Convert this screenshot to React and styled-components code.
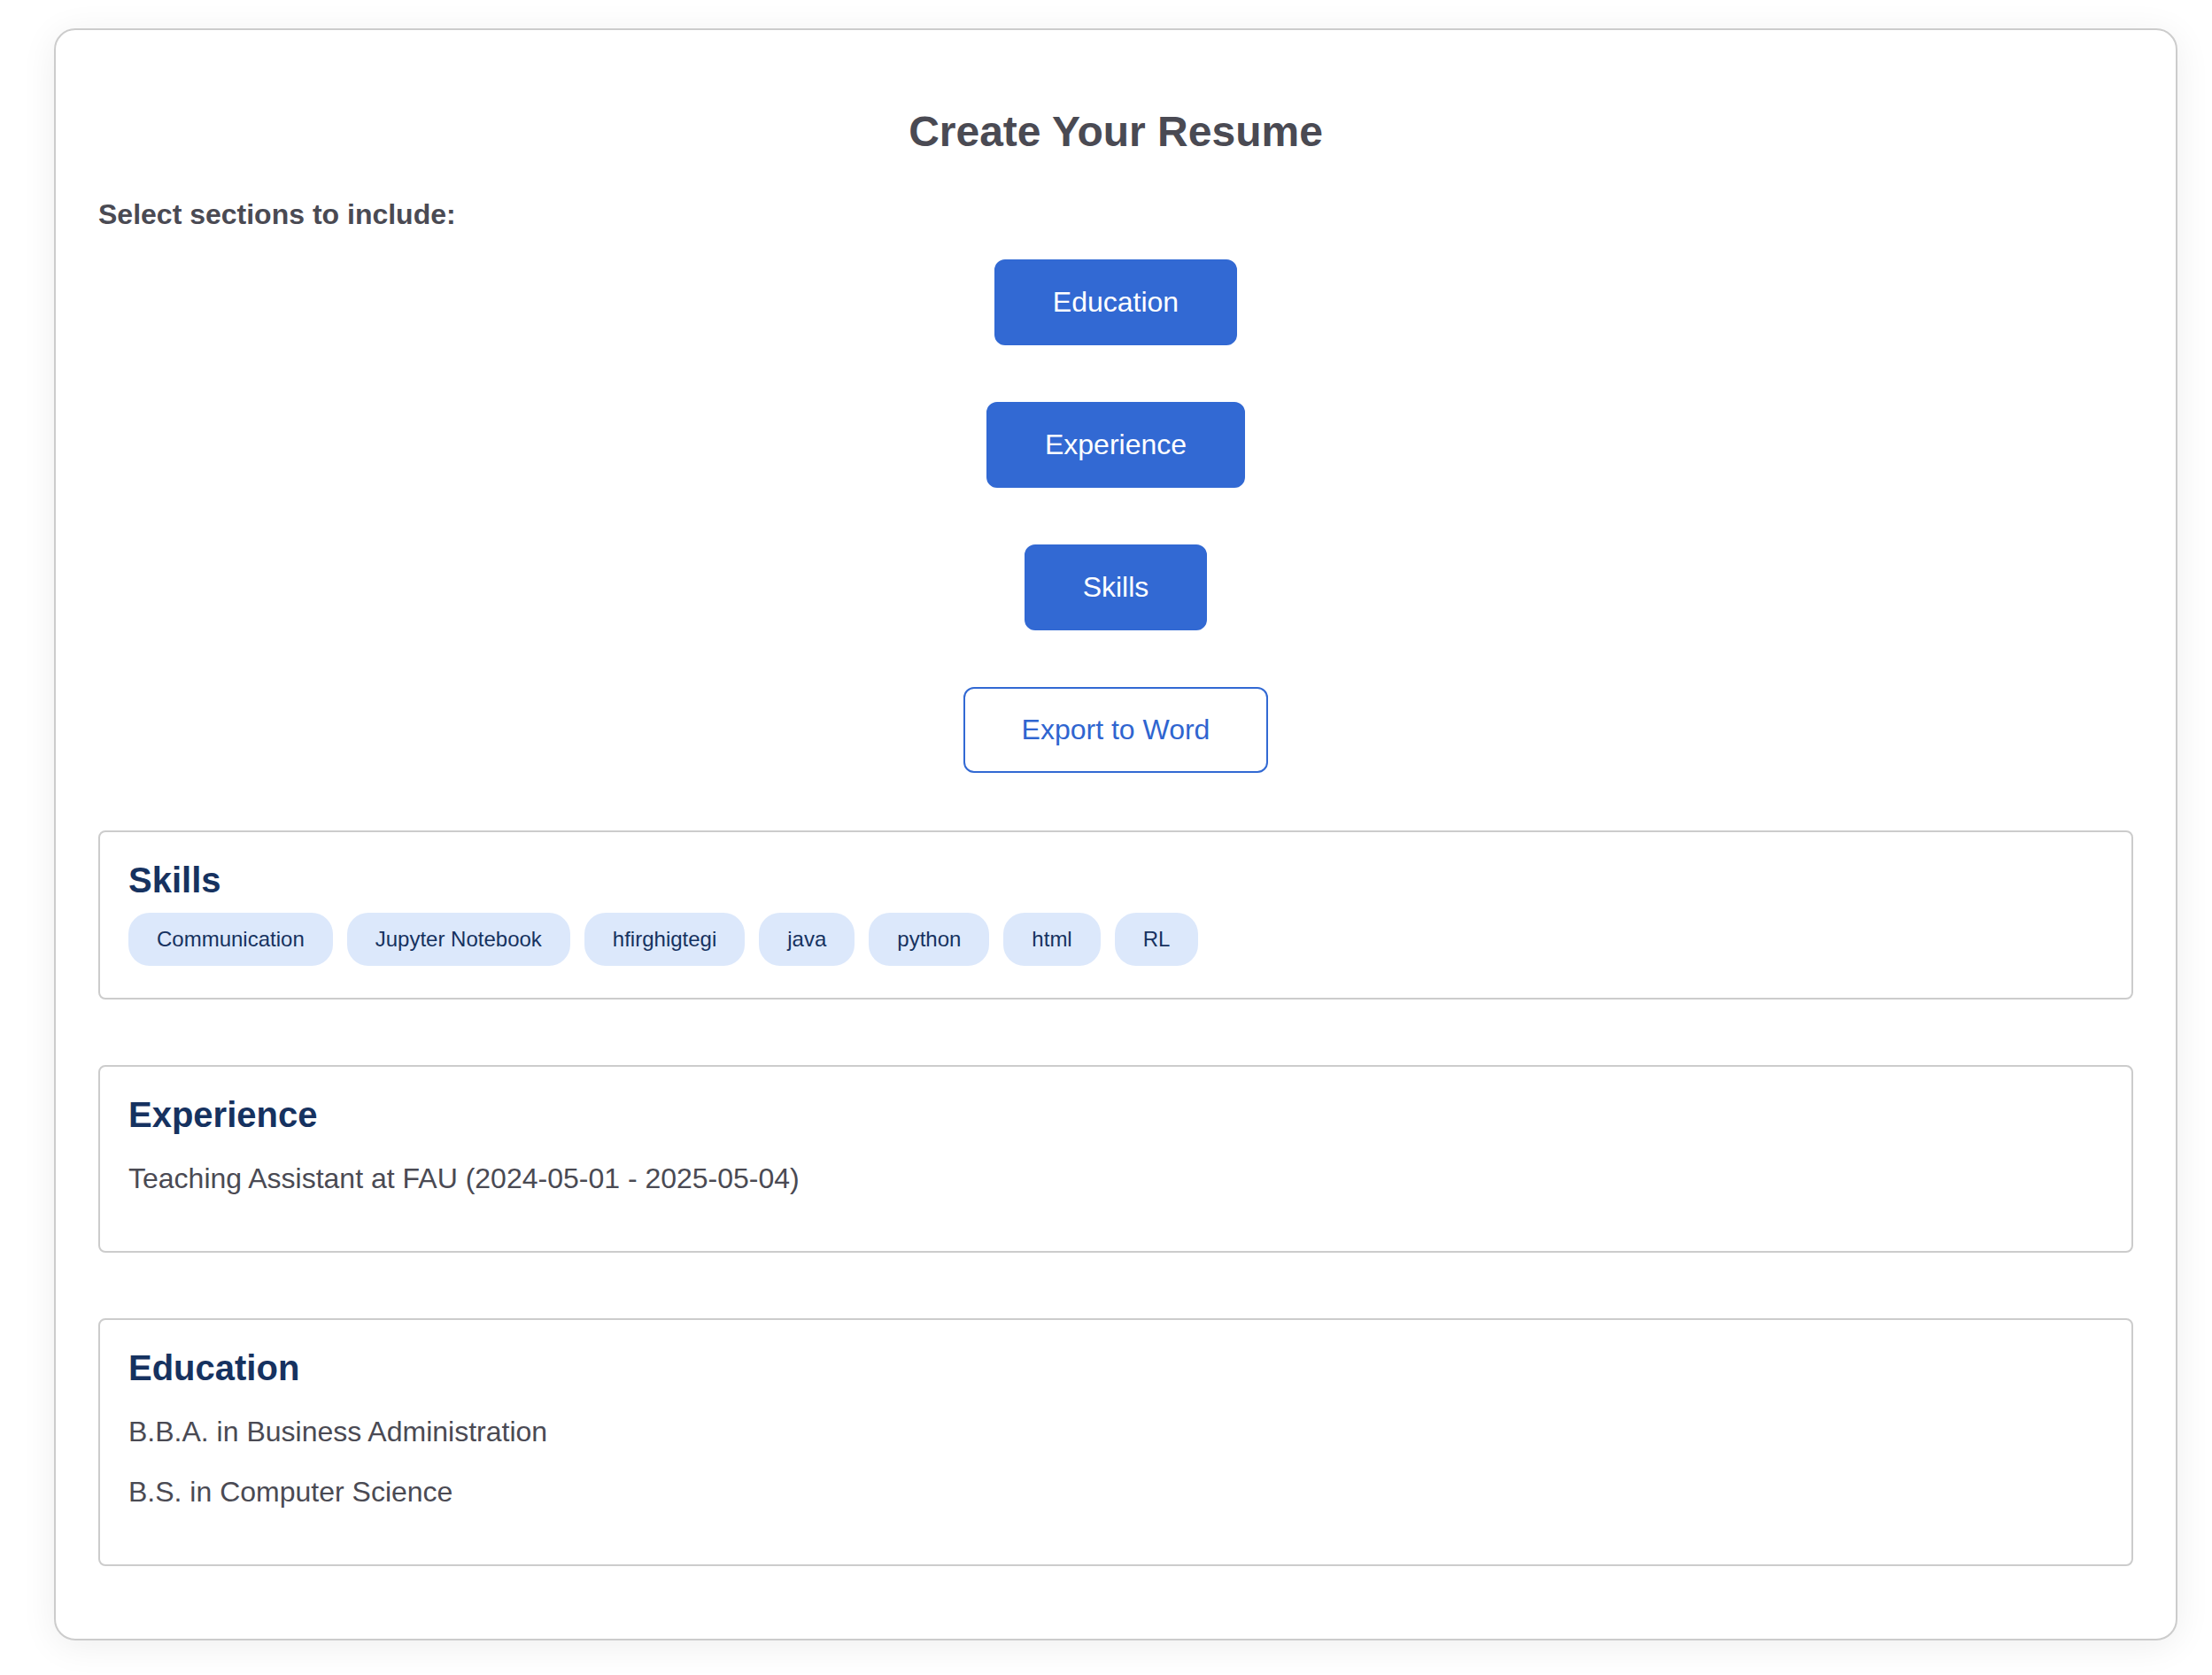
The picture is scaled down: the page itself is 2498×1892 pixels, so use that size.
import styled, { createGlobalStyle } from "styled-components";

const GlobalStyle = createGlobalStyle`
  body {
    margin: 0;
    background: #ffffff;
    font-family: "Liberation Sans", Arial, Helvetica, sans-serif;
  }
`;

const Page = styled.div`
  padding: 32px 39px 40px 61px;
`;

const Card = styled.div`
  background: #fff;
  border: 2px solid #cccccc;
  border-radius: 24px;
  padding: 48px;
  box-shadow: 0 6px 40px rgba(0, 0, 0, 0.07);
`;

const Title = styled.h2`
  margin: 39px 0 0;
  font-size: 48px;
  font-weight: 700;
  color: #4a4a53;
  text-align: center;
`;

const Label = styled.p`
  margin: 48px 0 0;
  font-size: 32px;
  font-weight: 700;
  color: #4a4a53;
`;

const ButtonColumn = styled.div`
  display: flex;
  flex-direction: column;
  align-items: center;
  gap: 64px;
  margin-top: 32px;
`;

const Button = styled.button`
  font-family: inherit;
  font-size: 32px;
  line-height: normal;
  padding: 28px 64px;
  border-radius: 12px;
  border: 2px solid #3269d3;
  background: ${(p) => (p.outline ? "#ffffff" : "#3269d3")};
  color: ${(p) => (p.outline ? "#2f65d0" : "#ffffff")};
  cursor: pointer;
`;

const Sections = styled.div`
  display: flex;
  flex-direction: column;
  gap: 74px;
  margin: 65px 0 34px;
`;

const Box = styled.section`
  border: 2px solid #cccccc;
  border-radius: 8px;
  padding: 32px;
`;

const BoxTitle = styled.h3`
  margin: 0 0 ${(p) => (p.tight ? "14px" : "0")};
  font-size: 40px;
  font-weight: 700;
  color: #163260;
`;

const Chips = styled.div`
  display: flex;
  flex-wrap: wrap;
  gap: 16px;
  padding-bottom: 4px;
`;

const Chip = styled.span`
  font-size: 24px;
  line-height: normal;
  padding: 16px 32px;
  border-radius: 24px;
  background: #dce8fb;
  color: #163260;
`;

const Line = styled.p`
  margin: 31px 0;
  font-size: 32px;
  color: #4a4a53;
`;

const skills = [
  "Communication",
  "Jupyter Notebook",
  "hfirghigtegi",
  "java",
  "python",
  "html",
  "RL",
];

const App = () => {
  return (
    <Page>
      <GlobalStyle />
      <Card>
        <Title>Create Your Resume</Title>
        <Label>Select sections to include:</Label>
        <ButtonColumn>
          <Button>Education</Button>
          <Button>Experience</Button>
          <Button>Skills</Button>
          <Button outline>Export to Word</Button>
        </ButtonColumn>
        <Sections>
          <Box>
            <BoxTitle tight>Skills</BoxTitle>
            <Chips>
              {skills.map((s) => (
                <Chip key={s}>{s}</Chip>
              ))}
            </Chips>
          </Box>
          <Box>
            <BoxTitle>Experience</BoxTitle>
            <Line>Teaching Assistant at FAU (2024-05-01 - 2025-05-04)</Line>
          </Box>
          <Box>
            <BoxTitle>Education</BoxTitle>
            <Line>B.B.A. in Business Administration</Line>
            <Line>B.S. in Computer Science</Line>
          </Box>
        </Sections>
      </Card>
    </Page>
  );
};

export default App;
